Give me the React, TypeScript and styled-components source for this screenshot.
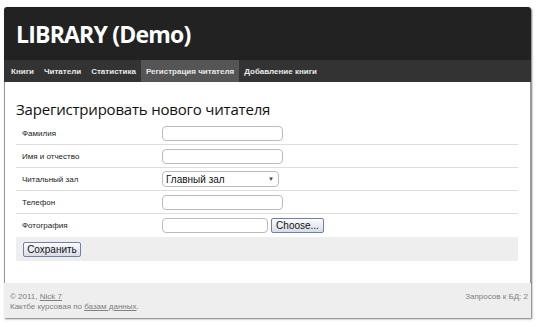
import React from "react";
import styled, { createGlobalStyle } from "styled-components";

const GlobalStyle = createGlobalStyle`
    html, body {
        margin: 0;
        padding: 0;
        background: #fff;
    }
`;

const Page = styled.div`
    padding: 7px 0 0 4px;
    width: 537px;
    height: 327px;
    box-sizing: border-box;
`;

const Panel = styled.div`
    width: 527px;
    height: 311px;
    display: flex;
    flex-direction: column;
    border-radius: 3px 3px 0 0;
    box-shadow: 1px 1px 2px rgba(0, 0, 0, 0.55);
    font-family: "Liberation Sans", Arial, sans-serif;
`;

const Header = styled.div`
    height: 53px;
    background: #222;
    border-radius: 3px 3px 0 0;
    display: flex;
    align-items: center;
    padding-left: 12px;
`;

const Logo = styled.h1`
    margin: 0;
    color: #fff;
    font-family: "Open Sans", sans-serif;
    font-weight: 700;
    font-size: 23px;
    letter-spacing: -0.8px;
`;

const Nav = styled.ul`
    height: 22px;
    margin: 0;
    padding: 0 0 0 2px;
    list-style: none;
    display: flex;
    background: #333;
`;

const NavItem = styled.li<{ active?: boolean }>`
    display: flex;
    align-items: center;
    padding: 0 5px;
    background: ${p => (p.active ? "#555" : "transparent")};
    color: #e8e8e8;
    font-size: 8px;
    font-weight: 700;
`;

const Content = styled.div`
    flex: 1;
    background: #fff;
    border-left: 1px solid #999;
    border-right: 1px solid #999;
    padding: 0 12px 0 11px;
`;

const Title = styled.h2`
    margin: 0;
    padding: 18px 0 3px 0;
    height: 19px;
    line-height: 19px;
    font-family: "Open Sans", sans-serif;
    font-weight: 400;
    font-size: 15px;
    letter-spacing: -0.2px;
    color: #111;
`;

const Form = styled.div`
    width: 502px;
`;

const Row = styled.div<{ last?: boolean }>`
    height: 23px;
    box-sizing: border-box;
    display: grid;
    grid-template-columns: 146px 1fr;
    align-items: center;
    border-bottom: ${p => (p.last ? "none" : "1px solid #ddd")};
`;

const Label = styled.span`
    padding-left: 6px;
    font-size: 8px;
    color: #222;
`;

const Field = styled.div`
    display: flex;
    align-items: center;
    gap: 3px;
`;

const TextBox = styled.div<{ w: number }>`
    width: ${p => p.w}px;
    height: 15px;
    box-sizing: border-box;
    border: 1px solid #bbb;
    border-radius: 4px;
    background: #fff;
`;

const Select = styled.div`
    width: 117px;
    height: 16px;
    box-sizing: border-box;
    border: 1px solid #bbb;
    border-radius: 4px;
    display: flex;
    align-items: center;
    justify-content: space-between;
    padding: 0 4px 0 3px;
    font-size: 10px;
    color: #111;
`;

const Arrow = styled.span`
    font-size: 6px;
    color: #444;
`;

const Button = styled.button<{ w: number }>`
    width: ${p => p.w}px;
    height: 15px;
    padding: 0;
    border: 1px solid #6f80a0;
    border-radius: 2px;
    background: linear-gradient(#fbfbfd, #d8dce8);
    font-family: "Liberation Sans", Arial, sans-serif;
    font-size: 10px;
    color: #111;
`;

const SubmitRow = styled.div`
    height: 24px;
    background: #eee;
    display: flex;
    align-items: center;
    padding-left: 7px;
`;

const Footer = styled.div`
    height: 35px;
    box-sizing: border-box;
    background: #eee;
    display: flex;
    justify-content: space-between;
    padding: 9px 3px 0 6px;
    font-size: 8px;
    line-height: 10px;
    color: #808080;
`;

const FootLink = styled.a`
    color: #808080;
    text-decoration: underline;
`;

const FIELDS: { label: string; kind: "text" | "select" | "file" }[] = [
    { label: "Фамилия", kind: "text" },
    { label: "Имя и отчество", kind: "text" },
    { label: "Читальный зал", kind: "select" },
    { label: "Телефон", kind: "text" },
    { label: "Фотография", kind: "file" },
];

const NAV = ["Книги", "Читатели", "Статистика", "Регистрация читателя", "Добавление книги"];

const App: React.FC = () => (
    <Page>
        <GlobalStyle />
        <Panel>
            <Header>
                <Logo>LIBRARY (Demo)</Logo>
            </Header>
            <Nav>
                {NAV.map(n => (
                    <NavItem key={n} active={n === "Регистрация читателя"}>
                        {n}
                    </NavItem>
                ))}
            </Nav>
            <Content>
                <Title>Зарегистрировать нового читателя</Title>
                <Form>
                    {FIELDS.map((f, i) => (
                        <Row key={f.label} last={i === FIELDS.length - 1}>
                            <Label>{f.label}</Label>
                            <Field>
                                {f.kind === "text" && <TextBox w={121} />}
                                {f.kind === "select" && (
                                    <Select>
                                        Главный зал<Arrow>▼</Arrow>
                                    </Select>
                                )}
                                {f.kind === "file" && (
                                    <>
                                        <TextBox w={106} />
                                        <Button w={53}>Choose...</Button>
                                    </>
                                )}
                            </Field>
                        </Row>
                    ))}
                    <SubmitRow>
                        <Button w={58}>Сохранить</Button>
                    </SubmitRow>
                </Form>
            </Content>
            <Footer>
                <div>
                    © 2011, <FootLink>Nick 7</FootLink>
                    <br />
                    Кактбе курсовая по <FootLink>базам данных</FootLink>.
                </div>
                <div>Запросов к БД: 2</div>
            </Footer>
        </Panel>
    </Page>
);

export default App;
